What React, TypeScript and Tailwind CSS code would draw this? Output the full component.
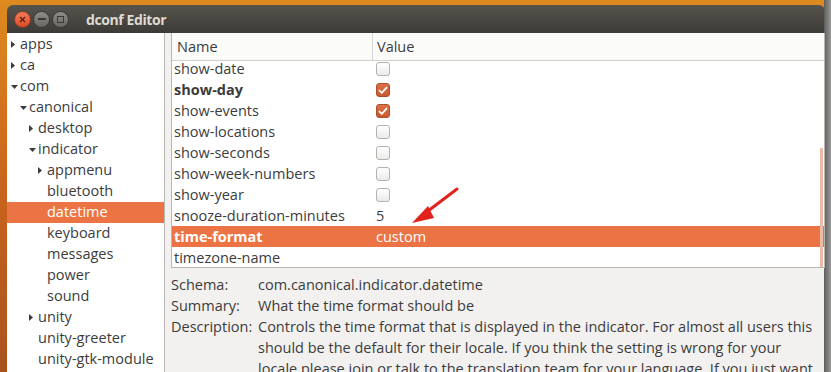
import type { ReactNode } from 'react';

type TreeNode = {
  label: string;
  level: number;
  expander?: 'open' | 'closed';
  selected?: boolean;
};

const TREE: TreeNode[] = [
  { label: 'apps', level: 0, expander: 'closed' },
  { label: 'ca', level: 0, expander: 'closed' },
  { label: 'com', level: 0, expander: 'open' },
  { label: 'canonical', level: 1, expander: 'open' },
  { label: 'desktop', level: 2, expander: 'closed' },
  { label: 'indicator', level: 2, expander: 'open' },
  { label: 'appmenu', level: 3, expander: 'closed' },
  { label: 'bluetooth', level: 3 },
  { label: 'datetime', level: 3, selected: true },
  { label: 'keyboard', level: 3 },
  { label: 'messages', level: 3 },
  { label: 'power', level: 3 },
  { label: 'sound', level: 3 },
  { label: 'unity', level: 2, expander: 'closed' },
  { label: 'unity-greeter', level: 2 },
  { label: 'unity-gtk-module', level: 2 },
];

type KeyRow = {
  name: string;
  value?: boolean | string;
  bold?: boolean;
  selected?: boolean;
};

const KEYS: KeyRow[] = [
  { name: 'show-date', value: false },
  { name: 'show-day', value: true, bold: true },
  { name: 'show-events', value: true },
  { name: 'show-locations', value: false },
  { name: 'show-seconds', value: false },
  { name: 'show-week-numbers', value: false },
  { name: 'show-year', value: false },
  { name: 'snooze-duration-minutes', value: '5' },
  { name: 'time-format', value: 'custom', bold: true, selected: true },
  { name: 'timezone-name' },
];

const INDENT = ['pl-[4px]', 'pl-[13px]', 'pl-[22px]', 'pl-[31px]'];

function Expander({ kind }: { kind?: 'open' | 'closed' }) {
  if (!kind) return <span className="w-[9px] shrink-0" />;
  return (
    <span className="w-[9px] shrink-0 flex items-center">
      {kind === 'closed' ? (
        <svg width="4" height="7" viewBox="0 0 4 7">
          <path d="M0 0 L4 3.5 L0 7 Z" fill="#3c3c3c" />
        </svg>
      ) : (
        <svg width="7" height="4" viewBox="0 0 7 4">
          <path d="M0 0 L7 0 L3.5 4 Z" fill="#3c3c3c" />
        </svg>
      )}
    </span>
  );
}

function Checkbox({ checked }: { checked: boolean }) {
  if (checked) {
    return (
      <span className="w-[14px] h-[14px] rounded-[3px] border border-[#a8502b] bg-gradient-to-b from-[#de7045] to-[#c95a2f] flex items-center justify-center">
        <svg width="10" height="8" viewBox="0 0 10 8">
          <path d="M1 4.2 L3.8 6.8 L9 1.2" fill="none" stroke="#fff" strokeWidth="1.8" />
        </svg>
      </span>
    );
  }
  return (
    <span className="w-[14px] h-[14px] rounded-[3px] border border-[#b4b2ae] bg-gradient-to-b from-[#ffffff] to-[#ecebe9]" />
  );
}

function InfoRow({ label, children }: { label: string; children: ReactNode }) {
  return (
    <div className="flex">
      <span className="w-[87px] shrink-0">{label}</span>
      <span className="flex-1">{children}</span>
    </div>
  );
}

export default function App() {
  return (
    <div
      className="relative w-[831px] h-[372px] overflow-hidden bg-gradient-to-b from-[#de8a1e] via-[#c9641c] to-[#a9521f] text-[#3c3c3c] text-[14.5px]"
      style={{ fontFamily: '"Open Sans", "Noto Sans", sans-serif' }}
    >
      {/* window shadow on the right */}
      <div className="absolute right-0 top-0 w-[7px] h-full bg-gradient-to-r from-[#5e5e5c] to-[#9a9a98]" />

      <div className="flex flex-col pt-[5px] pl-[7px] pr-[6px] h-full">
        {/* Title bar */}
        <div className="h-[28px] shrink-0 rounded-t-[6px] bg-gradient-to-b from-[#57544e] to-[#3d3b37] flex items-center pl-[7px]">
          <div className="flex items-center gap-[2px]">
            <span className="w-[17px] h-[17px] rounded-full bg-gradient-to-b from-[#f37b58] to-[#dc4a26] border border-[#8a3a22] flex items-center justify-center">
              <svg width="7" height="7" viewBox="0 0 7 7">
                <path d="M1 1 L6 6 M6 1 L1 6" stroke="#5a1d0d" strokeWidth="1.2" />
              </svg>
            </span>
            <span className="w-[17px] h-[17px] rounded-full bg-gradient-to-b from-[#8f8d87] to-[#6a6863] border border-[#3a3935] flex items-center justify-center">
              <span className="w-[8px] h-[1.5px] bg-[#3a3935]" />
            </span>
            <span className="w-[17px] h-[17px] rounded-full bg-gradient-to-b from-[#8f8d87] to-[#6a6863] border border-[#3a3935] flex items-center justify-center">
              <span className="w-[7px] h-[7px] border border-[#3a3935]" />
            </span>
          </div>
          <span className="ml-[17px] font-bold text-[14px] text-[#dfdbd2] tracking-[-0.4px]">dconf Editor</span>
        </div>

        {/* Body */}
        <div className="flex flex-1 min-h-0 bg-[#f2f1f0]">
          {/* Tree */}
          <div className="w-[158px] shrink-0 bg-white border-r border-[#b9b7b3] pt-[1px]">
            {TREE.map((n) => (
              <div
                key={n.label}
                className={`h-[21px] flex items-center ${INDENT[n.level]} ${
                  n.selected ? 'bg-[#ec7444] text-white' : ''
                }`}
              >
                <Expander kind={n.expander} />
                <span className="leading-none">{n.label}</span>
              </div>
            ))}
          </div>

          {/* Right side */}
          <div className="flex-1 flex flex-col pl-[6px] min-w-0">
            <div className="relative h-[235px] shrink-0 bg-white border border-t-0 border-[#b9b7b3] overflow-hidden">
              <div className="h-[28px] flex items-stretch bg-[#fbfbfa] border-b border-[#d3d1cd]">
                <div className="w-[201px] pl-[5px] flex items-center border-r border-[#dad8d4]">Name</div>
                <div className="pl-[4px] flex items-center">Value</div>
              </div>
              <div className="-mt-[3px]">
                {KEYS.map((k) => (
                  <div
                    key={k.name}
                    className={`h-[21px] flex items-center ${
                      k.selected ? 'bg-[#ec7444] text-white' : ''
                    }`}
                  >
                    <span className={`w-[204px] pl-[2px] ${k.bold ? 'font-bold' : ''}`}>{k.name}</span>
                    <span className="flex items-center">
                      {typeof k.value === 'boolean' ? <Checkbox checked={k.value} /> : k.value}
                    </span>
                  </div>
                ))}
              </div>
              {/* scrollbar */}
              <div className="absolute right-[1px] top-[115px] bottom-0 w-[3px] bg-[#ebbba5]" />
            </div>

            <div className="flex flex-col pt-[6px] leading-[21px]">
              <InfoRow label="Schema:">com.canonical.indicator.datetime</InfoRow>
              <InfoRow label="Summary:">What the time format should be</InfoRow>
              <InfoRow label="Description:">
                Controls the time format that is displayed in the indicator. For almost all users this
                <br />
                should be the default for their locale. If you think the setting is wrong for your
                <br />
                locale please join or talk to the translation team for your language. If you just want
              </InfoRow>
            </div>
          </div>
        </div>
      </div>

      {/* annotation arrow */}
      <svg className="absolute left-0 top-0 pointer-events-none" width="831" height="372">
        <path d="M457 189 L424 214" stroke="#e2231c" strokeWidth="3" strokeLinecap="round" />
        <path d="M412 223 L428 206 L434 218 Z" fill="#e2231c" />
      </svg>
    </div>
  );
}
